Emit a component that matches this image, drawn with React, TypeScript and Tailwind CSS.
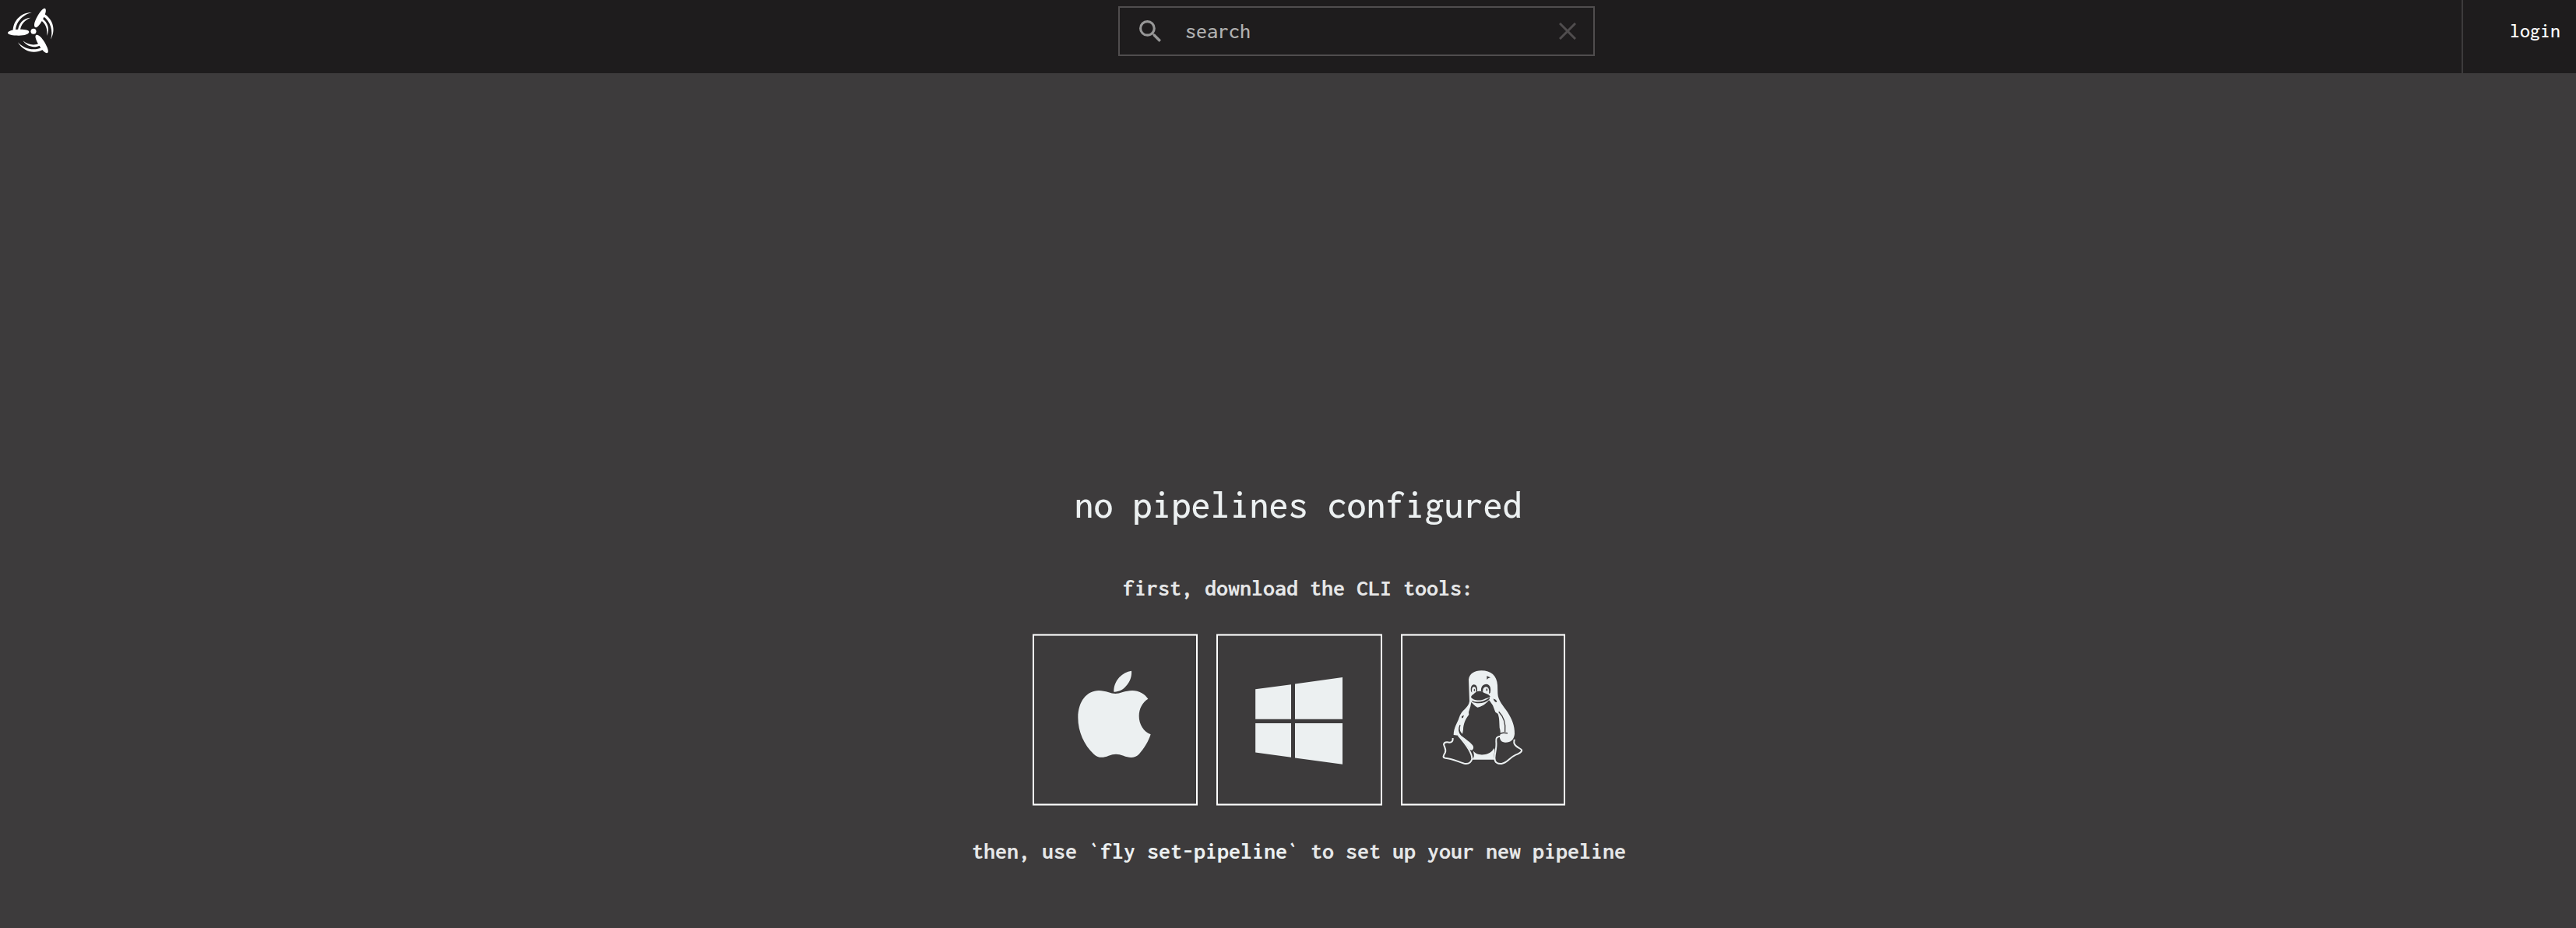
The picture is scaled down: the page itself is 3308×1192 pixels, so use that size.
import type { ReactNode } from "react";

const BLADES = [0, 120, 240];

function Logo() {
  return (
    <svg viewBox="0 0 300 282" className="h-[94px] w-[100px] shrink-0" fill="#fff">
      <circle cx="129" cy="121" r="10.5" />
      {BLADES.map((angle) => (
        <g key={angle} transform={`rotate(${angle} 129 121)`}>
          <path d="M30 126C32 117 55 113 78 113C98 113 112 116 112 123C112 131 96 137 72 137C48 137 30 134 30 126Z" />
          <path d="M50 118C51 80 80 48 123 48C90 55 61 84 60 118Z" />
          <path d="M69 118C71 92 88 70 118 68C96 76 79 95 78 118Z" />
        </g>
      ))}
    </svg>
  );
}

function SearchIcon() {
  return (
    <svg viewBox="3 3 17.5 17.5" className="h-[28px] w-[28px]" fill="#979797">
      <path d="M15.5 14h-.79l-.28-.27A6.471 6.471 0 0 0 16 9.5 6.5 6.5 0 1 0 9.5 16c1.61 0 3.09-.59 4.23-1.57l.27.28v.79l5 4.99L20.49 19l-4.99-5zm-6 0C7.01 14 5 11.99 5 9.5S7.01 5 9.5 5 14 7.01 14 9.5 11.99 14 9.5 14z" />
    </svg>
  );
}

function AppleIcon() {
  return (
    <svg viewBox="216 180 294 345" className="h-[115px] w-[98px]" fill="#ecf0f1">
      <path d="M429 185C431 207 423 227 408 244C395 259 379 267 361 266C360 246 367 227 382 210C395 196 411 188 429 185Z" />
      <path d="M493 293C471 306 458 331 458 359C458 391 476 419 503 430C494 458 476 487 458 506C440 524 418 520 398 512C378 504 360 504 341 512C319 521 302 522 284 506C246 470 223 419 223 365C223 302 258 261 303 261C330 261 350 273 367 273C384 273 404 261 432 261C458 261 480 274 493 293Z" />
    </svg>
  );
}

function WindowsIcon() {
  return (
    <svg viewBox="180 204 348 348" className="h-[116px] w-[116px]" fill="#ecf0f1">
      <path d="M186.500 256L324 237.500V371H186.500Z" />
      <path d="M339 235.500L522 210V371H339Z" />
      <path d="M186.500 387H324V518.500L186.500 499.500Z" />
      <path d="M339 387H522V545.500L339 520.500Z" />
    </svg>
  );
}

function LinuxIcon() {
  return (
    <svg viewBox="210 180 324 372" className="h-[124px] w-[108px]" fill="#ecf0f1">
      <path d="M318 218C321 196 340 184 367 184C404 184 427 204 429 240L430 272C431 300 452 320 468 344C484 370 496 396 495 428C493 450 480 461 460 461C445 461 437 451 438 438C439 430 443 424 437 404C436 380 436 362 430 350L421 344L411 318L400 302L396 298C386 312 368 324 352 326C341 322 336 312 328 306L325 322L318 344L319 354C305 371 297 392 297 412L294 428C286 424 279 413 281 400C277 415 281 427 290 436C305 446 322 460 332 470C339 478 337 487 330 491L322 489C309 468 292 444 277 434L260 432C260 402 275 386 281 366C290 334 317 330 321 302Z" />
      <path d="M335 493C345 508 365 510 382 507C400 504 409 494 416 483C422 494 411 510 418 527H330C343 517 338 506 335 493Z" />
      <path
        d="M257 444C258 456 253 461 244 461C235 459 224 460 222 468C225 482 233 488 227 501C220 512 217 519 228 521C255 523 278 536 301 542C316 545 327 538 331 525C332 503 312 473 278 434"
        fill="none"
        stroke="#ecf0f1"
        strokeWidth="6"
      />
      <path
        d="M440 437C427 438 422 445 424 458C427 480 419 499 418 521C418 539 430 544 445 543C468 540 474 520 499 509C510 505 525 497 522 490C517 481 500 481 494 466C491 459 494 455 494 449"
        fill="none"
        stroke="#ecf0f1"
        strokeWidth="6"
      />
      <g fill="#3d3b3c">
        <path d="M327 264C324 249 330 238 338 238C347 238 353 248 351 265H346C348 252 344 247 338 247C332 247 329 253 331 269Z" />
        <path d="M366 264C364 247 373 236 386 236C399 236 406 251 401 270L396 273C399 257 394 248 386 247C376 247 372 254 373 267Z" />
        <ellipse cx="340" cy="259" rx="2" ry="5" />
        <ellipse cx="388" cy="258" rx="2.500" ry="5" />
        <path d="M327 286C331 276 343 272 348 265C358 262 369 263 376 269C386 274 397 275 401 284C397 290 385 289 377 295C361 302 332 299 327 286Z" />
        <path d="M331 300C350 309 376 305 398 289L399 293C382 311 351 315 331 304Z" />
        <path d="M388 205L402 211L393 214L388 219Z" />
        <path d="M413 292C418 296 424 295 427 304C423 309 415 303 413 292Z" />
        <path d="M291 360L300 356L297 364L291 368Z" />
      </g>
      <path
        d="M434 343C451 360 462 382 458 420M437 429C448 420 461 424 468 426"
        fill="none"
        stroke="#3d3b3c"
        strokeWidth="4"
      />
      <path d="M285 394C280 407 283 421 291 429" fill="none" stroke="#3d3b3c" strokeWidth="4" />
    </svg>
  );
}

function Card({ width, label, children }: { width: string; label: string; children: ReactNode }) {
  return (
    <a
      aria-label={label}
      className={`${width} flex h-[219px] border-x-2 border-y border-white shadow-[0_-1px_0_#a9a9a9,0_1px_0_#a9a9a9,inset_0_1px_0_#a9a9a9,inset_0_-1px_0_#a9a9a9]`}
    >
      {children}
    </a>
  );
}

export default function App() {
  return (
    <div className="flex h-[1192px] w-[3308px] flex-col bg-[#3d3b3c] font-['Inconsolata','DejaVu_Sans_Mono',monospace] text-[#ecf0f1]">
      <header className="flex h-[94px] shrink-0 bg-[#1e1c1d]">
        <Logo />
        <div className="mt-2 ml-[1336px] flex h-16 w-[612px] items-center border-2 border-[#504d4e] pr-[22px] pb-px pl-[25px]">
          <SearchIcon />
          <span className="ml-[31px] grow text-[28px] leading-none font-medium text-[#b0b0b0]">search</span>
          <svg viewBox="0 0 22 22" className="h-[22px] w-[22px]" stroke="#504d4e" strokeWidth="3">
            <path d="M1 1L21 21M21 1L1 21" />
          </svg>
        </div>
        <div className="ml-auto flex w-[147px] justify-end border-l-2 border-[#3d3b3c] pt-[27px] pr-5">
          <span className="text-[26px] leading-[26px] font-medium text-white">login</span>
        </div>
      </header>
      <main className="flex flex-col items-center pt-[525px] pl-7">
        <h1 className="mr-0.5 h-[118px] text-[50px] leading-[60px] font-medium">no pipelines configured</h1>
        <p className="mr-0.5 h-[78px] text-[30px] leading-[36px] font-bold text-[#e6e7e8]">
          first, download the CLI tools:
        </p>
        <div className="flex gap-6">
          <Card width="w-[212px]" label="macOS">
            <div className="mt-[44px] ml-[54px]"><AppleIcon /></div>
          </Card>
          <Card width="w-[213px]" label="Windows">
            <div className="mt-[52px] ml-[46px]"><WindowsIcon /></div>
          </Card>
          <Card width="w-[211px]" label="Linux">
            <div className="mt-[44px] ml-[49px]"><LinuxIcon /></div>
          </Card>
        </div>
        <p className="mt-[41px] text-[30px] leading-[36px] font-bold text-[#e6e7e8]">
          then, use <span className="text-[#ecf0f1]">`fly set-pipeline`</span> to set up your new pipeline
        </p>
      </main>
    </div>
  );
}
